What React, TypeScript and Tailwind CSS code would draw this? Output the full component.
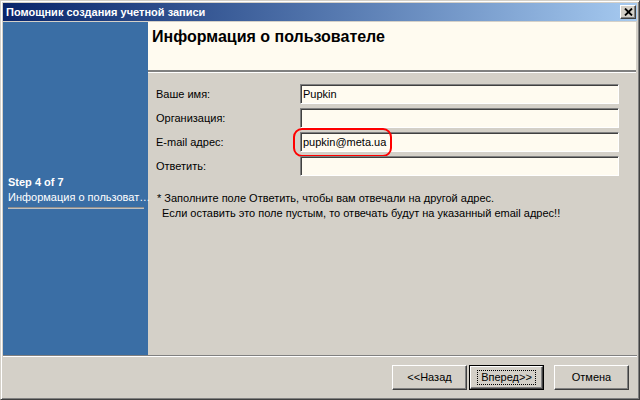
const fields = [
	{ label: 'Ваше имя:', value: 'Pupkin' },
	{ label: 'Организация:', value: '' },
	{ label: 'E-mail адрес:', value: 'pupkin@meta.ua', marked: true },
	{ label: 'Ответить:', value: '' },
];

const CloseIcon = () => (
	<svg width="9" height="8" viewBox="0 0 9 8" fill="none">
		<path d="M1 0.5 L8 7.5 M8 0.5 L1 7.5" stroke="#000" strokeWidth="1.8" />
	</svg>
);

interface ButtonProps {
	label: string;
	primary?: boolean;
}

const WizardButton = ({ label, primary }: ButtonProps) => {
	if (primary) {
		return (
			<button className="w-[75px] h-[25px] border border-black bg-[#d4d0c8]">
				<span className="flex h-full w-full items-center justify-center border border-t-white border-l-white border-r-[#404040] border-b-[#404040] shadow-[inset_-1px_-1px_0_#808080]">
					<span className="px-[3px] border border-dotted border-black leading-[13px]">{label}</span>
				</span>
			</button>
		);
	}
	return (
		<button className="w-[75px] h-[25px] border border-t-white border-l-white border-r-[#404040] border-b-[#404040] bg-[#d4d0c8] shadow-[inset_-1px_-1px_0_#808080]">
			{label}
		</button>
	);
};

const App = () => {
	return (
		<div className="w-[640px] h-[400px] flex flex-col bg-[#d4d0c8] border border-t-[#d4d0c8] border-l-[#d4d0c8] border-r-[#404040] border-b-[#404040] font-['Liberation_Sans',Arial,sans-serif] text-[11px] text-black">
			<div className="flex flex-col flex-1 pl-[1px] pt-[1px] pr-[2px] border-t border-l border-t-white border-l-white shadow-[inset_-1px_-1px_0_#808080]">
				{/* title bar */}
				<div className="h-[18px] flex items-center justify-between pl-[3px] pr-[1px] bg-gradient-to-r from-[#0a246a] to-[#a6caf0]">
					<span className="text-white font-bold leading-none">Помощник создания учетной записи</span>
					<div className="w-[16px] h-[14px] flex items-center justify-center bg-[#d4d0c8] border border-t-white border-l-white border-r-[#404040] border-b-[#404040] shadow-[inset_-1px_-1px_0_#808080]">
						<CloseIcon />
					</div>
				</div>

				<div className="flex flex-1 mt-px">
					{/* steps panel */}
					<div className="w-[145px] bg-[#3a6ea5] text-white pt-[153px] pl-[5px] pr-[4px]">
						<div className="font-bold leading-[15px]">Step 4 of 7</div>
						<div className="leading-[14px] whitespace-nowrap">Информация о пользоват…</div>
						<div className="mt-[3px] h-[2px] border-t border-t-[#8e8e8e] border-b border-b-[#c0c0c0]" />
					</div>

					<div className="flex-1 flex flex-col pr-[1px]">
						<div className="h-[50px] bg-[#fffbf0] pl-[4px] pt-[5px] border-b-2 border-b-[#808080]">
							<h1 className="text-[16px] font-bold leading-[20px]">Информация о пользователе</h1>
						</div>
						<div className="h-px bg-white" />

						<div className="flex flex-col gap-[4px] pt-[11px] pl-[8px] pr-[17px]">
							{fields.map((f) => (
								<div key={f.label} className="flex items-center h-[20px]">
									<span className="w-[144px]">{f.label}</span>
									<div className="relative flex-1 h-[20px]">
										<div className="h-full bg-[#fffbf0] border border-t-[#808080] border-l-[#808080] border-r-white border-b-white shadow-[inset_1px_1px_0_#404040] pl-[2px] pt-[1px] leading-[16px] text-[#000]">
											{f.value}
										</div>
										{f.marked && (
											<div className="absolute left-[-7px] top-[-4px] w-[99px] h-[29px] rounded-[9px] border-2 border-[#ff0000]" />
										)}
									</div>
								</div>
							))}
						</div>

						<div className="pl-[9px] pt-[15px] leading-[15px]">
							<p>* Заполните поле Ответить, чтобы вам отвечали на другой адрес.</p>
							<p className="pl-[5px]">Если оставить это поле пустым, то отвечать будут на указанный email адрес!!</p>
						</div>
					</div>
				</div>

				{/* button bar */}
				<div className="border-t border-t-[#808080]">
					<div className="border-t border-t-white flex justify-end items-start pt-[8px] pr-[8px] h-[43px]">
						<div className="flex">
							<WizardButton label="<<Назад" />
							<div className="ml-[2px]">
								<WizardButton label="Вперед>>" primary />
							</div>
							<div className="ml-[10px]">
								<WizardButton label="Отмена" />
							</div>
						</div>
					</div>
				</div>
			</div>
		</div>
	);
};

export default App;
